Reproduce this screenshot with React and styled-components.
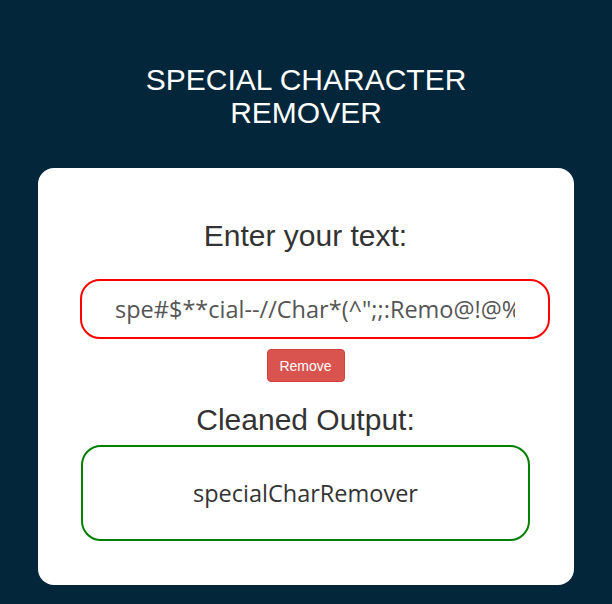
import React, { useState } from "react";
import styled, { createGlobalStyle } from "styled-components";

const GlobalStyle = createGlobalStyle`
  html, body {
    margin: 0;
    padding: 0;
    background: #03263b;
  }
  * {
    box-sizing: border-box;
  }
`;

const Page = styled.div`
  min-height: 604px;
  background: #03263b;
  display: flex;
  flex-direction: column;
  align-items: center;
  padding-top: 63px;
  font-family: "Liberation Sans", Arial, sans-serif;
`;

const Title = styled.h1`
  margin: 0 0 39px;
  width: 360px;
  color: #ffffff;
  font-size: 30px;
  font-weight: 400;
  line-height: 33px;
  text-align: center;
`;

const Card = styled.div`
  width: 536px;
  background: #ffffff;
  border-radius: 16px;
  padding: 50px 44px 44px 43px;
  display: flex;
  flex-direction: column;
  align-items: center;
`;

const Heading = styled.h2`
  margin: 0;
  color: #333333;
  font-size: 30px;
  font-weight: 400;
  line-height: 36px;
  text-align: center;
`;

const Field = styled.input`
  width: 470px;
  height: 60px;
  margin: 25px 0 0 -1px;
  padding: 0 33px;
  align-self: flex-start;
  border: 2px solid ${({ $color }) => $color};
  border-radius: 20px;
  background: #ffffff;
  color: #555555;
  font-family: "Open Sans", sans-serif;
  font-size: 23.5px;
  text-align: center;
  outline: none;
`;

const Button = styled.button`
  margin: 10px 0 20px;
  width: 78px;
  height: 33px;
  background: #d9534f;
  border: 1px solid #d43f3a;
  border-radius: 4px;
  color: #ffffff;
  font-family: "Liberation Sans", Arial, sans-serif;
  font-size: 14px;
  cursor: pointer;
`;

const Output = styled.div`
  width: 100%;
  height: 96px;
  margin-top: 7px;
  border: 2px solid ${({ $color }) => $color};
  border-radius: 20px;
  display: flex;
  align-items: center;
  justify-content: center;
  color: #333333;
  font-family: "Open Sans", sans-serif;
  font-size: 23.5px;
`;

const clean = (s) => s.replace(/[^a-zA-Z0-9]/g, "");

export default function App() {
  const [text, setText] = useState('spe#$**cial--//Char*(^";;:Remo@!@%ver');
  const [result, setResult] = useState("specialCharRemover");

  return (
    <>
      <GlobalStyle />
      <Page>
        <Title>SPECIAL CHARACTER REMOVER</Title>
        <Card>
          <Heading>Enter your text:</Heading>
          <Field
            $color="#ff0000"
            value={text}
            onChange={(e) => setText(e.target.value)}
          />
          <Button onClick={() => setResult(clean(text))}>Remove</Button>
          <Heading>Cleaned Output:</Heading>
          <Output $color="#008000">{result}</Output>
        </Card>
      </Page>
    </>
  );
}
